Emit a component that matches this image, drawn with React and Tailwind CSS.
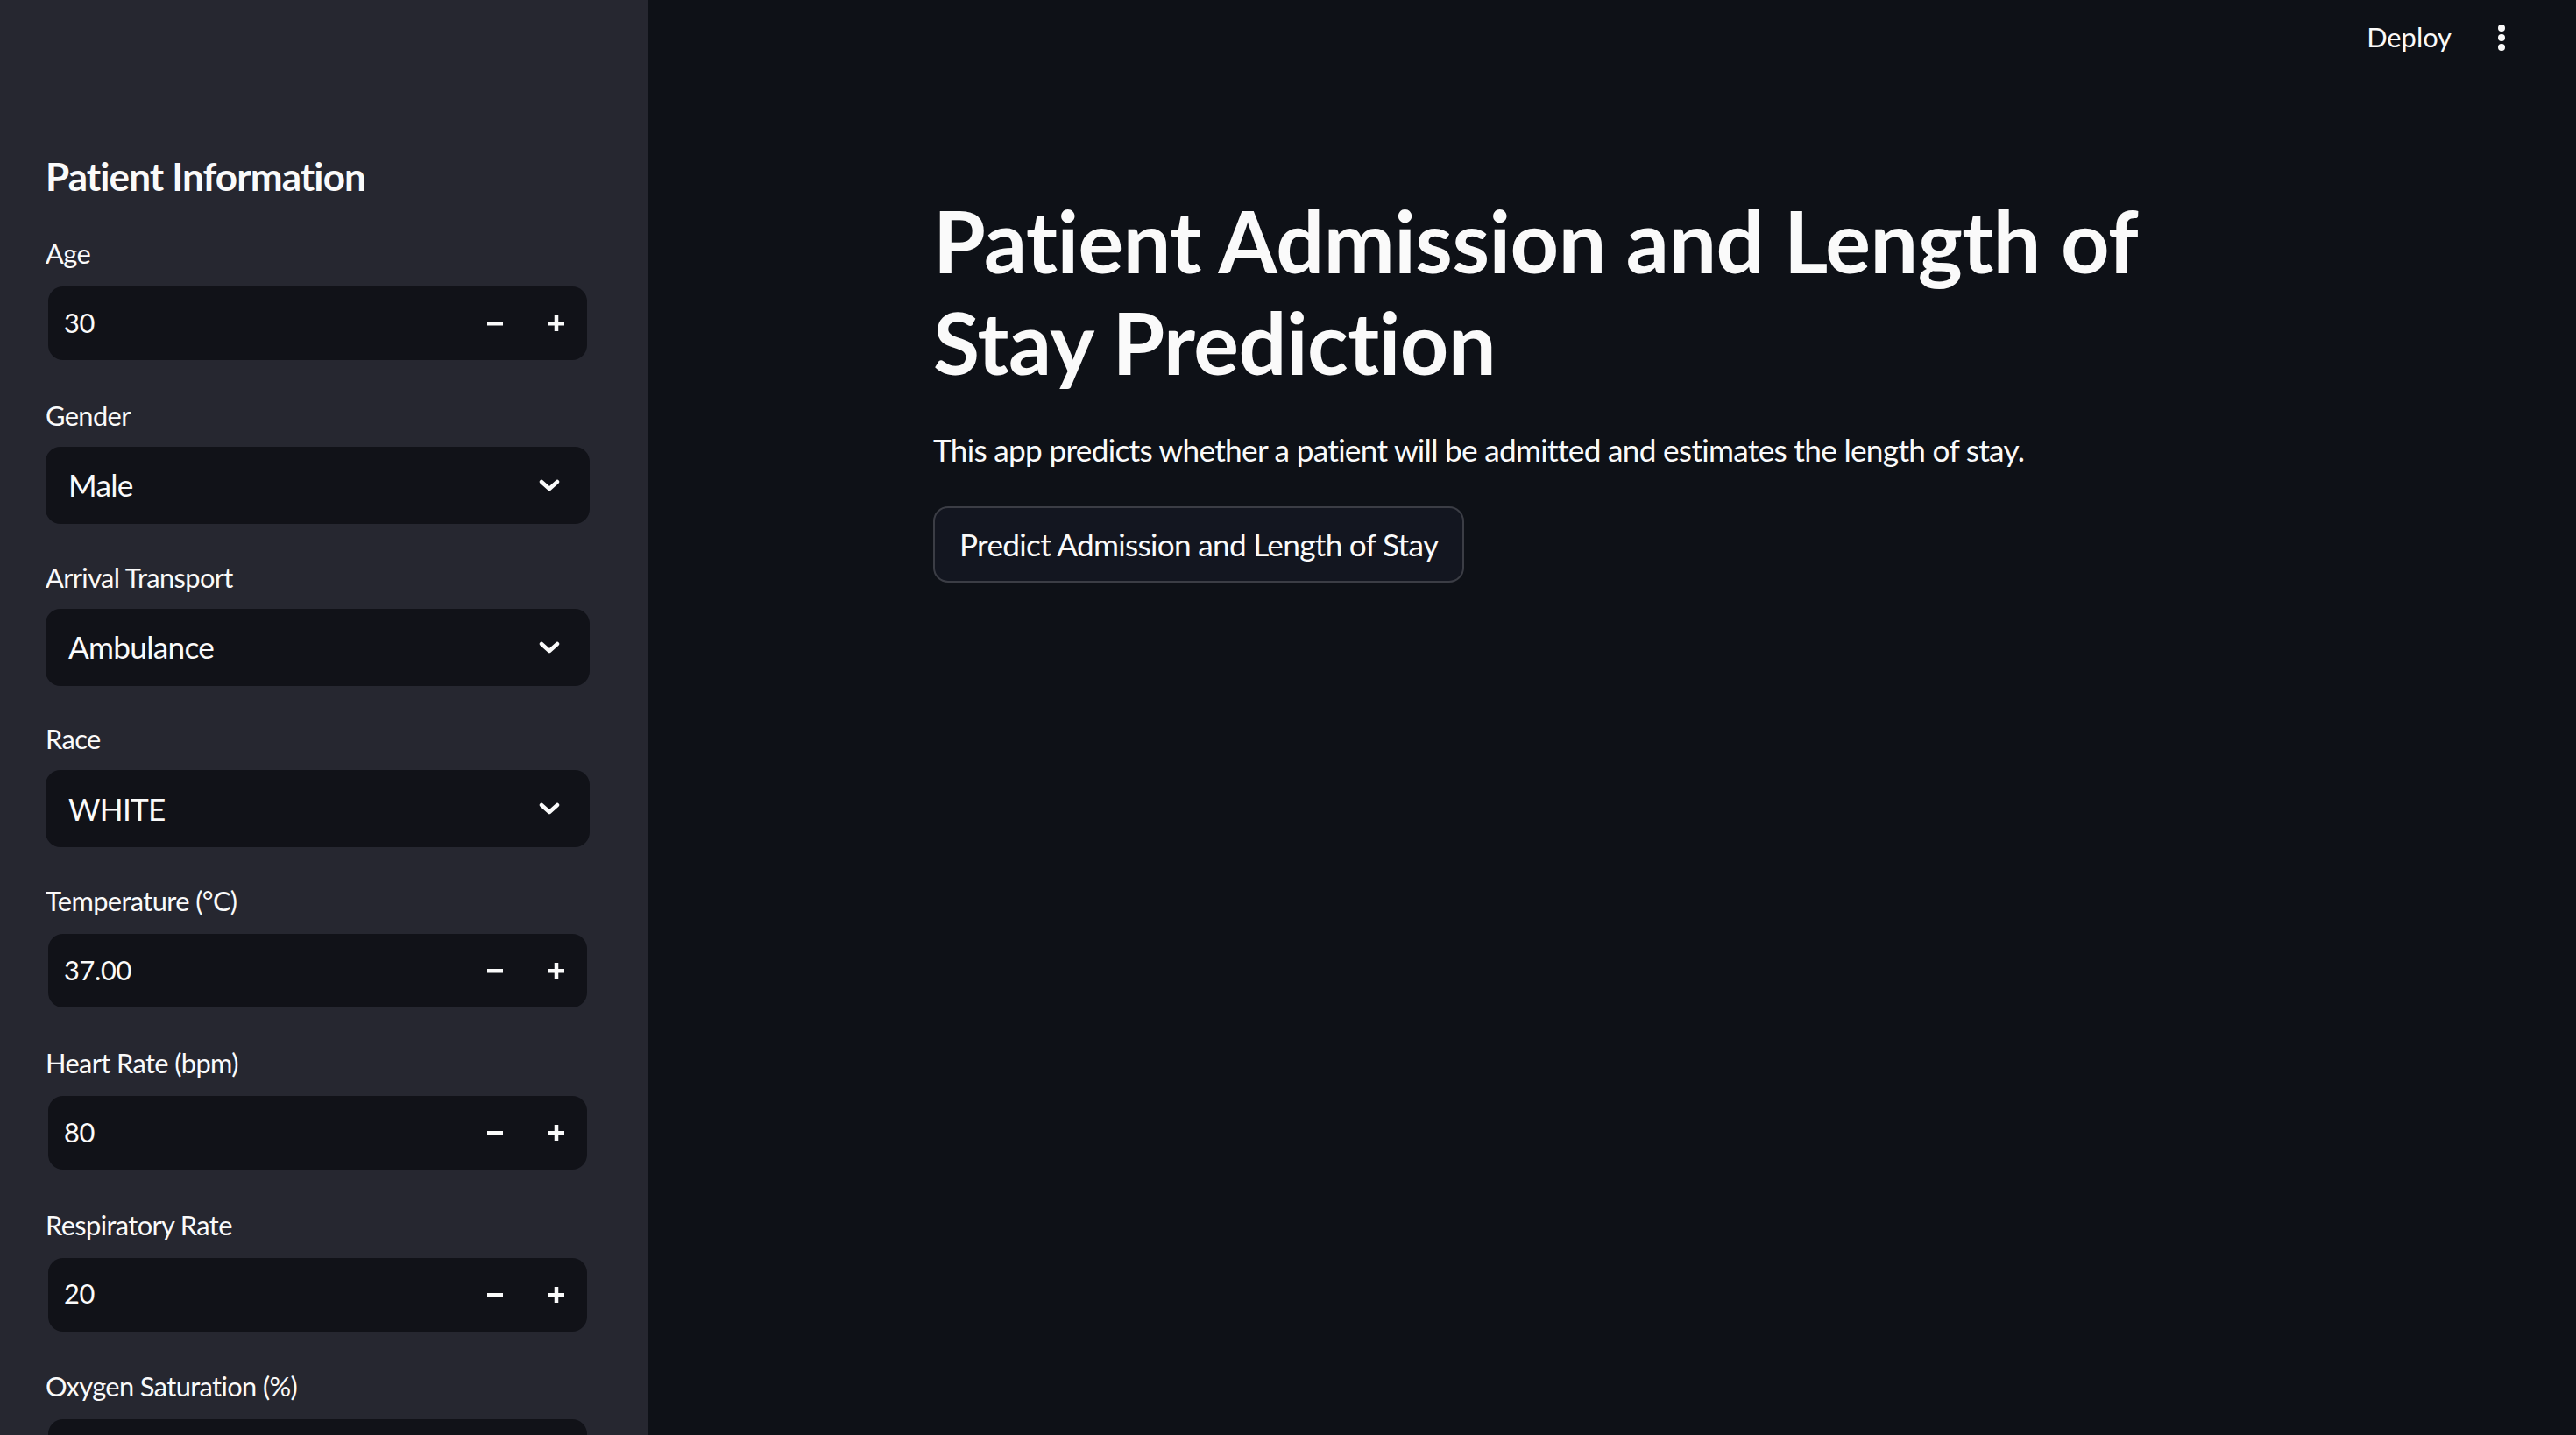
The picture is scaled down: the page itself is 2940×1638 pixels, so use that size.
import { useState } from "react";

const fields = [
  { label: "Age", kind: "number", value: "30" },
  { label: "Gender", kind: "select", value: "Male" },
  { label: "Arrival Transport", kind: "select", value: "Ambulance" },
  { label: "Race", kind: "select", value: "WHITE" },
  { label: "Temperature (°C)", kind: "number", value: "37.00" },
  { label: "Heart Rate (bpm)", kind: "number", value: "80" },
  { label: "Respiratory Rate", kind: "number", value: "20" },
  { label: "Oxygen Saturation (%)", kind: "number", value: "" },
];

function Minus() {
  return (
    <svg width="18" height="18" viewBox="0 0 18 18">
      <rect x="0" y="7" width="18" height="4.5" fill="#fafafa" />
    </svg>
  );
}

function Plus() {
  return (
    <svg width="18" height="18" viewBox="0 0 18 18">
      <rect x="0" y="7" width="18" height="4.5" fill="#fafafa" />
      <rect x="6.75" y="0" width="4.5" height="18" fill="#fafafa" />
    </svg>
  );
}

function Chevron() {
  return (
    <svg width="24" height="14" viewBox="0 0 24 14">
      <polyline points="3,3 12,11 21,3" fill="none" stroke="#fafafa" strokeWidth="4.5" strokeLinecap="round" strokeLinejoin="round" />
    </svg>
  );
}

function NumberField({ value }) {
  return (
    <div className="h-[88px] px-[3px] py-[2px]">
      <div className="flex h-full items-center rounded-[17px] bg-[#111218]">
        <span className="flex-1 pl-[18px] text-[30.8px] tracking-[-0.01em]">{value}</span>
        <button className="flex h-full w-[70px] items-center justify-center">
          <Minus />
        </button>
        <button className="flex h-full w-[70px] items-center justify-center">
          <Plus />
        </button>
      </div>
    </div>
  );
}

function SelectField({ value }) {
  return (
    <div className="flex h-[88px] items-center rounded-[17px] bg-[#111218] pl-[26px] pr-[34px]">
      <span className="flex-1 text-[35.2px] tracking-[-0.02em]">{value}</span>
      <Chevron />
    </div>
  );
}

export default function App() {
  const [open] = useState(true);
  return (
    <div className="flex h-[1638px] w-full overflow-hidden bg-[#0e1117] text-[#fafafa] font-['Lato',sans-serif]">
      {open && (
        <aside className="h-full w-[739px] shrink-0 overflow-hidden bg-[#262730] pl-[52px] pr-[66px] pt-[175px]">
          <h2 className="h-[53px] text-[44px] font-bold leading-[53px] tracking-[-0.02em]">Patient Information</h2>
          <div className="mt-[40px] flex flex-col gap-[39.75px]">
            {fields.map((f) => (
              <div key={f.label}>
                <div className="mb-[13px] h-[44px] text-[30.8px] leading-[44px] tracking-[-0.02em]">{f.label}</div>
                {f.kind === "number" ? <NumberField value={f.value} /> : <SelectField value={f.value} />}
              </div>
            ))}
          </div>
        </aside>
      )}

      <main className="flex h-full flex-1 flex-col">
        <header className="flex h-[86px] shrink-0 items-center justify-end gap-[52px] pr-[80px]">
          <span className="text-[30.8px]">Deploy</span>
          <svg width="10" height="32" viewBox="0 0 10 32">
            <circle cx="5" cy="5" r="4" fill="#fafafa" />
            <circle cx="5" cy="16" r="4" fill="#fafafa" />
            <circle cx="5" cy="27" r="4" fill="#fafafa" />
          </svg>
        </header>

        <div className="mx-auto w-[1549px] pt-[131px]">
          <h1 className="text-[96.8px] font-bold leading-[116px] tracking-[-0.005em]">
            Patient Admission and Length of
            <br />
            Stay Prediction
          </h1>
          <p className="mt-[36px] h-[56px] text-[35.2px] leading-[56px] tracking-[-0.02em]">
            This app predicts whether a patient will be admitted and estimates the length of stay.
          </p>
          <button className="mt-[37px] h-[87px] rounded-[17px] border-2 border-[#3b3d45] bg-[#131620] px-[28px] text-[35.2px] tracking-[-0.02em]">
            Predict Admission and Length of Stay
          </button>
        </div>
      </main>
    </div>
  );
}
